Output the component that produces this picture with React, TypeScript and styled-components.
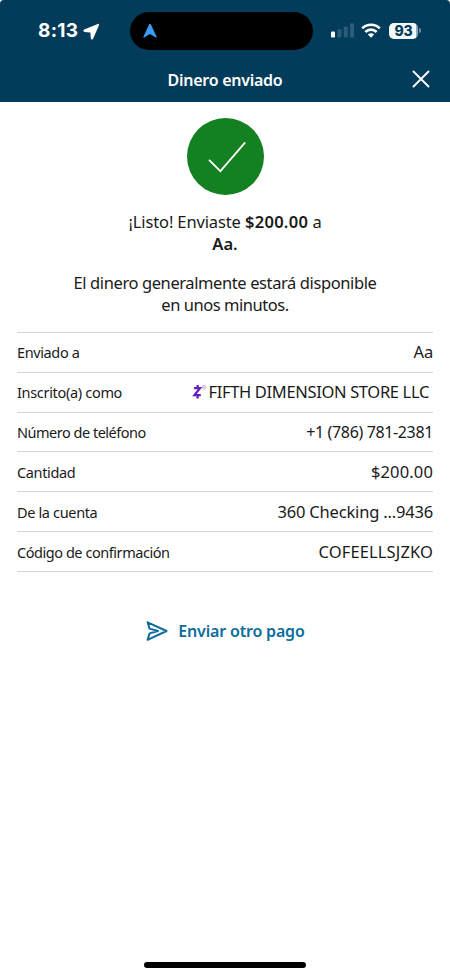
import React from "react";
import styled, { createGlobalStyle } from "styled-components";

const GlobalStyle = createGlobalStyle`
  body { margin: 0; background: #fff; }
  *, *::before, *::after { box-sizing: border-box; }
`;

const Screen = styled.div`
  width: 450px;
  height: 976px;
  display: flex;
  flex-direction: column;
  background: #fff;
  color: #1a1a1a;
  font-family: "Noto Sans", "Open Sans", sans-serif;
  overflow: hidden;
`;

const Header = styled.header`
  height: 102px;
  flex: none;
  background: #033c5a;
  border-radius: 4px 4px 0 0;
  color: #fff;
`;

const StatusBar = styled.div`
  height: 62px;
  display: grid;
  grid-template-columns: 130px 183px 1fr;
  align-items: center;
`;

const Clock = styled.div`
  display: flex;
  align-items: center;
  gap: 5px;
  padding-left: 38px;
  font: 700 19px/24px Inter, sans-serif;
  letter-spacing: 0.3px;
`;

const Island = styled.div`
  height: 38px;
  display: flex;
  align-items: center;
  padding-left: 13px;
  border-radius: 19px;
  background: #000;
`;

const Indicators = styled.div`
  display: flex;
  align-items: center;
  padding: 0 28px 1px 18px;
`;

const WifiIcon = styled.svg`
  margin-left: 7px;
`;

const Battery = styled.div`
  width: 29px;
  height: 16px;
  margin-left: 8px;
  border-radius: 5px;
  background: linear-gradient(90deg, #f4fafc 93%, #8ea9b7 93%);
  color: #033c5a;
  font: 800 14px/16.5px Inter, sans-serif;
  letter-spacing: -0.2px;
  text-align: center;
`;

const BatteryCap = styled.span`
  width: 2px;
  height: 5px;
  margin-left: 1px;
  border-radius: 0 2px 2px 0;
  background: #6f92a5;
`;

const TitleBar = styled.div`
  height: 35px;
  display: grid;
  grid-template-columns: 60px 1fr 60px;
  align-items: center;
`;

const Title = styled.h1`
  grid-column: 2;
  margin: 0;
  text-align: center;
  font-size: 16px;
  font-weight: 600;
  line-height: 22px;
  letter-spacing: -0.27px;
`;

const CloseButton = styled.button`
  display: flex;
  justify-content: flex-end;
  padding: 0 20px 1px 0;
  border: 0;
  background: none;
  color: #fff;
`;

const Content = styled.main`
  flex: 1;
  display: flex;
  flex-direction: column;
  align-items: center;
  padding: 16px 17px 0;
`;

const SuccessBadge = styled.div`
  width: 77px;
  height: 77px;
  border-radius: 50%;
  background: #138021;
`;

const Message = styled.p<{ $top: number }>`
  margin: ${(p) => p.$top}px 0 0;
  text-align: center;
  font-size: 16.5px;
  line-height: 21.6px;
`;

const Line = styled.span<{ $tracking: number }>`
  display: block;
  letter-spacing: ${(p) => p.$tracking}px;
`;

const Strong = styled.strong<{ $tracking?: number }>`
  font-weight: 600;
  letter-spacing: ${(p) => p.$tracking ?? 0}px;
`;

const Details = styled.dl`
  width: 416px;
  margin: 16.6px 0 0;
  border-top: 1px solid #d4d4d4;
`;

const Row = styled.div`
  height: 39.85px;
  display: flex;
  align-items: center;
  justify-content: space-between;
  border-bottom: 1px solid #d4d4d4;
  white-space: nowrap;
`;

const Label = styled.dt<{ $tracking: number }>`
  font-size: 14.5px;
  line-height: 20px;
  letter-spacing: ${(p) => p.$tracking}px;
`;

const Value = styled.dd<{ $tracking: number; $size?: number; $inset?: number }>`
  display: flex;
  align-items: center;
  margin: 0 ${(p) => p.$inset ?? 0}px 0 0;
  font-size: ${(p) => p.$size ?? 16.5}px;
  line-height: 22px;
  letter-spacing: ${(p) => p.$tracking}px;
`;

const ZelleMark = styled.svg`
  margin-right: 1px;
`;

const SendAgain = styled.button`
  display: flex;
  align-items: center;
  gap: 10px;
  margin: 47px 0 0 1px;
  padding: 0;
  border: 0;
  background: none;
  color: #0c6d9c;
  font: 600 16px/24px "Noto Sans", sans-serif;
  letter-spacing: -0.18px;
`;

const HomeIndicator = styled.div`
  width: 162px;
  height: 6px;
  margin: 0 auto 8px;
  border-radius: 3px;
  background: #000;
`;

type Detail = {
  label: string;
  labelTracking: number;
  value: string;
  tracking: number;
  size?: number;
  inset?: number;
  zelle?: boolean;
};

const details: Detail[] = [
  { label: "Enviado a", labelTracking: -0.38, value: "Aa", tracking: -0.2 },
  { label: "Inscrito(a) como", labelTracking: -0.32, value: "FIFTH DIMENSION STORE LLC", tracking: -0.34, inset: 4, zelle: true },
  { label: "Número de teléfono", labelTracking: -0.49, value: "+1 (786) 781-2381", tracking: -0.36, size: 16 },
  { label: "Cantidad", labelTracking: -0.35, value: "$200.00", tracking: 0.15 },
  { label: "De la cuenta", labelTracking: -0.35, value: "360 Checking ...9436", tracking: -0.18 },
  { label: "Código de confirmación", labelTracking: -0.45, value: "COFEELLSJZKO", tracking: 0.12 },
];

function Zelle() {
  return (
    <ZelleMark width="15" height="16" viewBox="0 0 15 16" fill="none">
      <path d="M2 4.2h6L2.5 11.1h6.3M5.6 1v3M5.6 11.3v3.2" stroke="#6420bd" strokeWidth="2.3" />
      <circle cx="12" cy="3.3" r="1.9" stroke="#b9a1db" strokeWidth=".7" />
      <path d="M11.4 4.4V2.3h.8q.7 0 .7.6t-.7.6h-.8m.8 0 .7.9" stroke="#b9a1db" strokeWidth=".5" />
    </ZelleMark>
  );
}

export default function App() {
  return (
    <Screen>
      <GlobalStyle />
      <Header>
        <StatusBar>
          <Clock>
            8:13
            <svg width="17" height="17" viewBox="0 0 17 17">
              <path d="M14.8.9 1.2 6.6C-.1 7.2.2 8.8 1.6 8.9l5.8.5.4 5.8c.1 1.4 1.8 1.7 2.4.4l5.8-13.4c.4-.9-.3-1.6-1.2-1.3Z" fill="#fff" />
            </svg>
          </Clock>
          <Island>
            <svg width="14" height="16" viewBox="0 0 14 16">
              <path d="M6.2 1.2.4 13.7c-.3.7.2 1.1.8.7L7 11l5.8 3.4c.6.4 1.1 0 .8-.7L7.8 1.2c-.3-.7-1.3-.7-1.6 0Z" fill="#3d9bf8" />
            </svg>
          </Island>
          <Indicators>
            <svg width="23" height="15" viewBox="0 0 23 15">
              <rect x="0" y="8.5" width="4" height="6" rx="1" fill="#fff" />
              <rect x="6.4" y="6.2" width="4" height="8.3" rx="1" fill="#2b5c78" />
              <rect x="12.8" y="3.5" width="4" height="11" rx="1" fill="#2b5c78" />
              <rect x="19" y="0.2" width="4" height="14.3" rx="1" fill="#2b5c78" />
            </svg>
            <WifiIcon width="20" height="15" viewBox="0 0 20 15">
              <g fill="none" stroke="#fff" strokeWidth="2.6">
                <path d="M1.2 5.4a12.5 12.5 0 0 1 17.6 0" />
                <path d="M4.4 9a7.9 7.9 0 0 1 11.2 0" />
              </g>
              <path d="M6.9 11.6a4.4 4.4 0 0 1 6.2 0L10 14.8Z" fill="#fff" />
            </WifiIcon>
            <Battery>93</Battery>
            <BatteryCap />
          </Indicators>
        </StatusBar>
        <TitleBar>
          <Title>Dinero enviado</Title>
          <CloseButton aria-label="Cerrar">
            <svg width="18" height="18" viewBox="0 0 18 18">
              <path d="m1.5 1.5 15 15m0-15-15 15" stroke="#fff" strokeWidth="1.9" strokeLinecap="round" />
            </svg>
          </CloseButton>
        </TitleBar>
      </Header>
      <Content>
        <SuccessBadge>
          <svg width="77" height="77" viewBox="0 0 77 77" fill="none">
            <path d="m22 41.8 11.4 11.3L58.2 24.4" stroke="#fff" strokeWidth="1.8" />
          </svg>
        </SuccessBadge>
        <Message $top={16.2}>
          <Line $tracking={-0.13}>
            ¡Listo! Enviaste <Strong $tracking={0.3}>$200.00</Strong> a
          </Line>
          <Line $tracking={0}>
            <Strong>Aa.</Strong>
          </Line>
        </Message>
        <Message $top={17.8}>
          <Line $tracking={-0.4}>El dinero generalmente estará disponible</Line>
          <Line $tracking={-0.46}>en unos minutos.</Line>
        </Message>
        <Details>
          {details.map((d) => (
            <Row key={d.label}>
              <Label $tracking={d.labelTracking}>{d.label}</Label>
              <Value $tracking={d.tracking} $size={d.size} $inset={d.inset}>
                {d.zelle && <Zelle />}
                {d.value}
              </Value>
            </Row>
          ))}
        </Details>
        <SendAgain>
          <svg width="22" height="22" viewBox="0 0 22 22" fill="none" stroke="#0c6d9c" strokeWidth="2" strokeLinejoin="round" strokeLinecap="round">
            <path d="M1.6 2.3 20.5 11 1.6 19.8l2-6.4L12 11 3.6 8.6Z" />
          </svg>
          Enviar otro pago
        </SendAgain>
      </Content>
      <HomeIndicator />
    </Screen>
  );
}
